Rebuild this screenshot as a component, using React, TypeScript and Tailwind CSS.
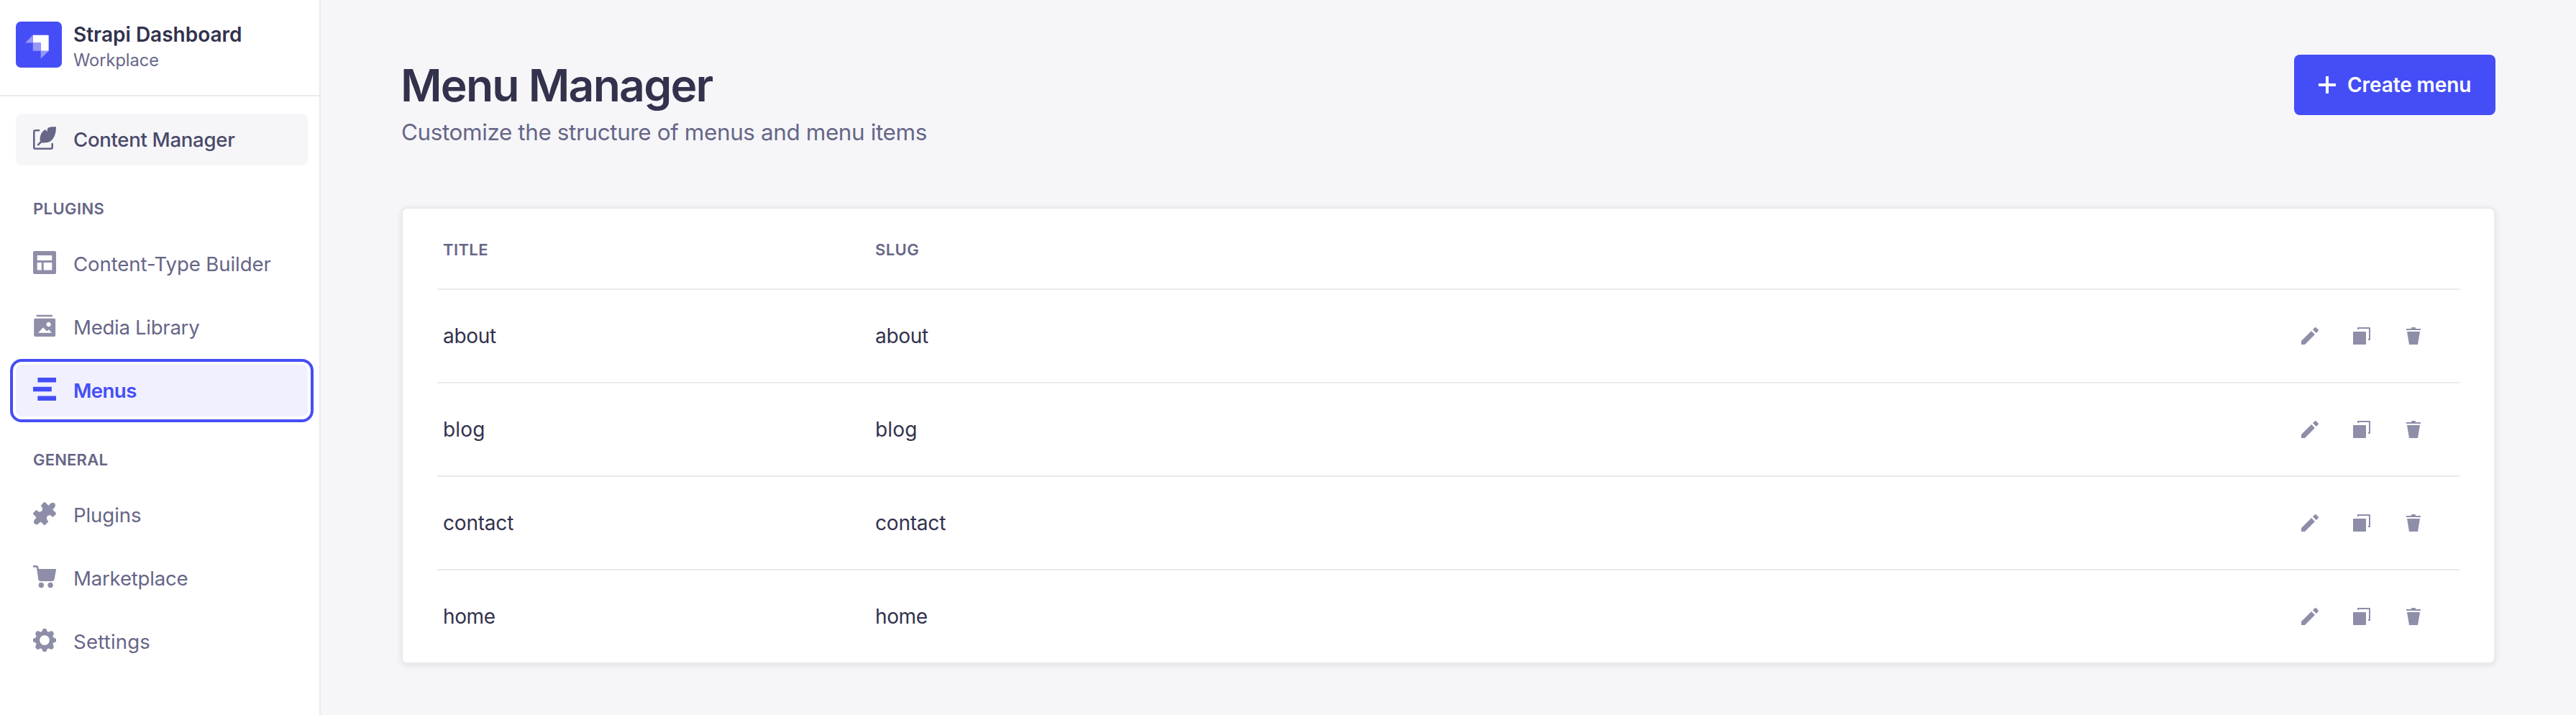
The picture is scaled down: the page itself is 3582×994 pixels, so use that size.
import React from "react";

type IconProps = { className?: string };

const Feather = ({ className }: IconProps) => (
  <svg viewBox="0 0 32 32" className={className} fill="none">
    <path d="M8.2 5.3H3.3a2 2 0 0 0-2 2V28.7a2 2 0 0 0 2 2H24.7a2 2 0 0 0 2-2V24" stroke="currentColor" strokeWidth="2.6" strokeLinecap="round" />
    <path d="M7 25.2L15 17.5" stroke="currentColor" strokeWidth="2.6" strokeLinecap="round" />
    <path d="M31.9.2C28 0 23.6.2 21.2 1.4 19.6 2.4 19.6 4.6 20.2 7.4 19.2 6 18.2 4.4 16.4 4.3 13.4 6 10.8 9.8 10 13.6 9.4 16.6 9.5 18.8 10 20.8L12 22.6C16 22.6 20 22.5 23 21 29 17.6 32.2 10 31.9.2z" fill="currentColor" />
  </svg>
);

const Layout = ({ className }: IconProps) => (
  <svg viewBox="0 0 32 32" className={className} fill="currentColor" fillRule="evenodd">
    <path d="M2 0H30a2 2 0 0 1 2 2V30a2 2 0 0 1-2 2H2a2 2 0 0 1-2-2V2A2 2 0 0 1 2 0zM6.4 6a.7.7 0 0 0-.7.7V12.2a.7.7 0 0 0 .7.7H25.6a.7.7 0 0 0 .7-.7V6.7a.7.7 0 0 0-.7-.7zM6.4 16a.7.7 0 0 0-.7.7V25.8a.7.7 0 0 0 .7.7H11.8V16zM14.7 16V26.5H25.6a.7.7 0 0 0 .7-.7V16.7a.7.7 0 0 0-.7-.7z" />
  </svg>
);

const Media = ({ className }: IconProps) => (
  <svg viewBox="0 0 32 32" className={className} fill="currentColor" fillRule="evenodd">
    <rect x="4.5" y=".7" width="22.6" height="2.6" rx="1" />
    <path d="M3 5.7H29.3a1.8 1.8 0 0 1 1.8 1.8V29.2a1.8 1.8 0 0 1-1.8 1.8H3a1.8 1.8 0 0 1-1.8-1.8V7.5A1.8 1.8 0 0 1 3 5.7zM21.6 10.8a3.2 3.2 0 1 0 .01 0zM7 25.8H26L22 21.2 19.2 23.6 14 18.3z" />
  </svg>
);

const MenuBars = ({ className }: IconProps) => (
  <svg viewBox="0 0 32 32" className={className} fill="currentColor">
    <path d="M6.4 0H32V6.6H6.4zM0 12.7H25.8V19.3H0zM6.4 25.4H32V32H6.4z" />
  </svg>
);

const Puzzle = ({ className }: IconProps) => (
  <svg viewBox="0 0 32 32" className={className} fill="currentColor">
    <path d="M14.8 .6Q16 -.5 17.2 .6L20.8 4.2Q21.6 5 22.6 3.8C24.6 .8 27.4 .2 29.3 1.3 31.9 3 31.3 7.2 28.2 9.2Q27 10 27.8 11.1L31.4 14.8Q32.5 16 31.4 17.2L28 20.6Q27.3 21.2 26.6 20.4C24.5 17.6 20.6 17.8 19.4 20.4 18.4 22.6 19.2 24.8 20.8 26.2Q21.6 26.8 20.9 27.6L17.2 31.4Q16 32.5 14.8 31.4L11.4 28Q10.4 27.2 9.4 28.3C7.4 31.3 4.4 31.8 2.6 30.6 .1 28.9 .7 25 3.8 22.8Q5 22 4.2 20.9L.6 17.2Q-.5 16 .6 14.8L4.1 11.3Q4.8 10.7 5.5 11.5C7.6 14.3 11.4 14.2 12.6 11.6 13.6 9.4 12.8 7.2 11.2 5.8Q10.4 5.2 11.1 4.4z" />
  </svg>
);

const Cart = ({ className }: IconProps) => (
  <svg viewBox="0 0 32 32" className={className} fill="currentColor">
    <path d="M.6 0H4.5A3 3 0 0 1 7.5 2.6L7.9 5H31.2a.8.8 0 0 1 .8 1L29.6 19.2A3.4 3.4 0 0 1 26.3 22H10.5a3.4 3.4 0 0 1-3.3-3L5 3.4A.9.9 0 0 0 4.2 2.7H.6A.6.6 0 0 1 0 2.1V.6A.6.6 0 0 1 .6 0z" />
    <circle cx="11.3" cy="27.5" r="3.7" />
    <circle cx="24.1" cy="27.5" r="3.7" />
  </svg>
);

const Cog = ({ className }: IconProps) => (
  <svg viewBox="0 0 32 32" className={className} fill="currentColor" fillRule="evenodd">
    <path d="M14 0h4l1.8 3.7q.6 1.1 1.8.7l4-1.3q2.4 .9 3.3 3.3l-1.3 4q-.4 1.2.7 1.8L32 14v4l-3.7 1.8q-1.1.6-.7 1.8l1.3 4q-.9 2.4-3.3 3.3l-4-1.3q-1.2-.4-1.8.7L18 32h-4l-1.8-3.7q-.6-1.1-1.8-.7l-4 1.3q-2.4-.9-3.3-3.3l1.3-4q.4-1.2-.7-1.8L0 18v-4l3.7-1.8q1.1-.6.7-1.8l-1.3-4q.9-2.4 3.3-3.3l4 1.3q1.2.4 1.8-.7zM16 9.2a6.8 6.8 0 1 0 .01 0z" />
  </svg>
);

const Pencil = () => (
  <svg viewBox="0 0 24 24" className="size-6" fill="currentColor">
    <path d="M0 19V24H5L18.9 9.9 14.1 5.1zM16 3.2L18.6.6a1.6 1.6 0 0 1 2.2 0L23.4 3.2a1.6 1.6 0 0 1 0 2.2L20.8 8z" />
  </svg>
);

const Duplicate = () => (
  <svg viewBox="0 0 24 24" className="size-6" fill="currentColor">
    <rect x="0" y="6" width="18" height="18" rx=".9" />
    <path d="M6 3V.9A.9.9 0 0 1 6.9 0H23.1a.9.9 0 0 1 .9.9V17.1a.9.9 0 0 1-.9.9H21V16H22V2H8V3z" />
  </svg>
);

const Trash = () => (
  <svg viewBox="0 0 24 24" className="size-6" fill="currentColor">
    <path d="M2 2H8.6L9.6 0H14.4L15.4 2H22V4H2zM3 6H21L18 24H6z" />
  </svg>
);

const Logo = () => (
  <svg viewBox="0 0 64 64" className="size-16 shrink-0">
    <rect width="64" height="64" rx="7" fill="#454ef6" />
    <path d="M23.7 18.7H44.9a.8.8 0 0 1 .8.8V40.7H34.7V29.6H23.7z" fill="#fff" />
    <path d="M23.7 29.6H34.7V40.7H24.5a.8.8 0 0 1-.8-.8zM13.2 29.6L23.7 18.7V29.6zM34.7 40.7H45.7L34.7 51.4z" fill="#9797fa" />
  </svg>
);

type NavItemProps = {
  Icon: (p: IconProps) => React.ReactElement;
  label: string;
  box?: string;
  icon?: string;
  text: string;
};

const NavItem = ({ Icon, label, box = "", icon = "text-[#8e8ea9]", text }: NavItemProps) => (
  <a className={"flex h-18 items-center gap-6 rounded-lg pl-6 " + box}>
    <Icon className={"mb-1 size-8 shrink-0 " + icon} />
    <span className={"text-[27.6px] leading-10 whitespace-nowrap " + text}>{label}</span>
  </a>
);

const SectionLabel = ({ children, className }: { children: string; className: string }) => (
  <div className={"flex h-[101px] items-center pt-5 pl-6 text-[22px] font-semibold text-[#666687] " + className}>{children}</div>
);

const rows = [
  { name: "about", spacing: "tracking-[-0.3px]" },
  { name: "blog", spacing: "tracking-[0.2px]" },
  { name: "contact", spacing: "tracking-[-0.2px]" },
  { name: "home", spacing: "tracking-[-0.4px]" },
];

export default function App() {
  return (
    <div className="flex h-[994px] w-full overflow-hidden bg-[#f6f6f9] font-['Inter','Liberation_Sans',sans-serif]">
      <aside className="flex w-[446px] shrink-0 flex-col border-r-2 border-[#eaeaef] bg-white">
        <div className="flex h-[134px] shrink-0 gap-4 border-b-2 border-[#eaeaef] pt-[30px] pl-[22px]">
          <Logo />
          <div className="flex flex-col">
            <span className="text-[28px] leading-9 font-semibold text-[#32324d]">Strapi Dashboard</span>
            <span className="pt-0.5 text-[23.6px] leading-8 text-[#666687]">Workplace</span>
          </div>
        </div>
        <nav className="flex flex-col pt-6 pr-4 pl-[22px]">
          <NavItem Icon={Feather} label="Content Manager" box="bg-[#f6f6f9]" icon="text-[#666687]" text="font-[450] tracking-[-0.32px] text-[#4a4a6a]" />
          <SectionLabel className="tracking-[0.4px]">PLUGINS</SectionLabel>
          <div className="flex flex-col gap-4">
            <NavItem Icon={Layout} label="Content-Type Builder" text="tracking-[-0.1px] text-[#666687]" />
            <NavItem Icon={Media} label="Media Library" text="tracking-[-0.3px] text-[#666687]" />
            <NavItem
              Icon={MenuBars}
              label="Menus"
              box="bg-[#f0f0ff] outline-4 outline-offset-4 outline-[#454ef6]"
              icon="text-[#454ef6]"
              text="font-semibold tracking-[-0.6px] text-[#454ef6]"
            />
          </div>
          <SectionLabel className="tracking-[0.2px]">GENERAL</SectionLabel>
          <div className="flex flex-col gap-4">
            <NavItem Icon={Puzzle} label="Plugins" text="tracking-[-0.1px] text-[#666687]" />
            <NavItem Icon={Cart} label="Marketplace" text="tracking-[-0.22px] text-[#666687]" />
            <NavItem Icon={Cog} label="Settings" text="tracking-[0.18px] text-[#666687]" />
          </div>
        </nav>
      </aside>

      <main className="flex grow flex-col pt-[76px] pr-28 pl-28">
        <header className="flex h-[212px] items-start justify-between">
          <div className="flex flex-col gap-px pt-[3px]">
            <h1 className="-ml-px text-[62.4px] leading-20 font-semibold tracking-[-1.75px] text-[#32324d]">Menu Manager</h1>
            <p className="text-[31.4px] leading-12 tracking-[-0.36px] text-[#666687]">Customize the structure of menus and menu items</p>
          </div>
          <button className="flex h-21 w-70 items-center gap-4 rounded-lg bg-[#454ef6] pl-[34px] text-white">
            <svg viewBox="0 0 24 24" className="size-6 shrink-0" fill="currentColor">
              <path d="M10 0H14V10H24V14H14V24H10V14H0V10H10z" />
            </svg>
            <span className="text-[28px] leading-10 font-semibold whitespace-nowrap tracking-[-0.1px]">Create menu</span>
          </button>
        </header>

        <section className="flex flex-col rounded-lg border-2 border-[#eaeaef] bg-white px-12 shadow-[0_2px_8px_rgba(33,33,52,0.1)]">
          <div className="flex h-[113px] items-center border-b-2 border-[#eaeaef] pt-[3px] pl-2 text-[22px] font-semibold text-[#666687]">
            <span className="w-[601px] tracking-[0.4px]">TITLE</span>
            <span className="tracking-[0.4px]">SLUG</span>
          </div>
          {rows.map((r) => (
            <div key={r.name} className="box-content flex h-32 items-center border-b-2 border-[#eaeaef] pl-2 text-[28px] leading-10 text-[#32324d] last:border-b-0">
              <span className={"w-[601px] " + r.spacing}>{r.name}</span>
              <span className={"grow " + r.spacing}>{r.name}</span>
              <div className="flex gap-12 pr-[52px] text-[#8e8ea9]">
                <Pencil />
                <Duplicate />
                <Trash />
              </div>
            </div>
          ))}
        </section>
      </main>
    </div>
  );
}
